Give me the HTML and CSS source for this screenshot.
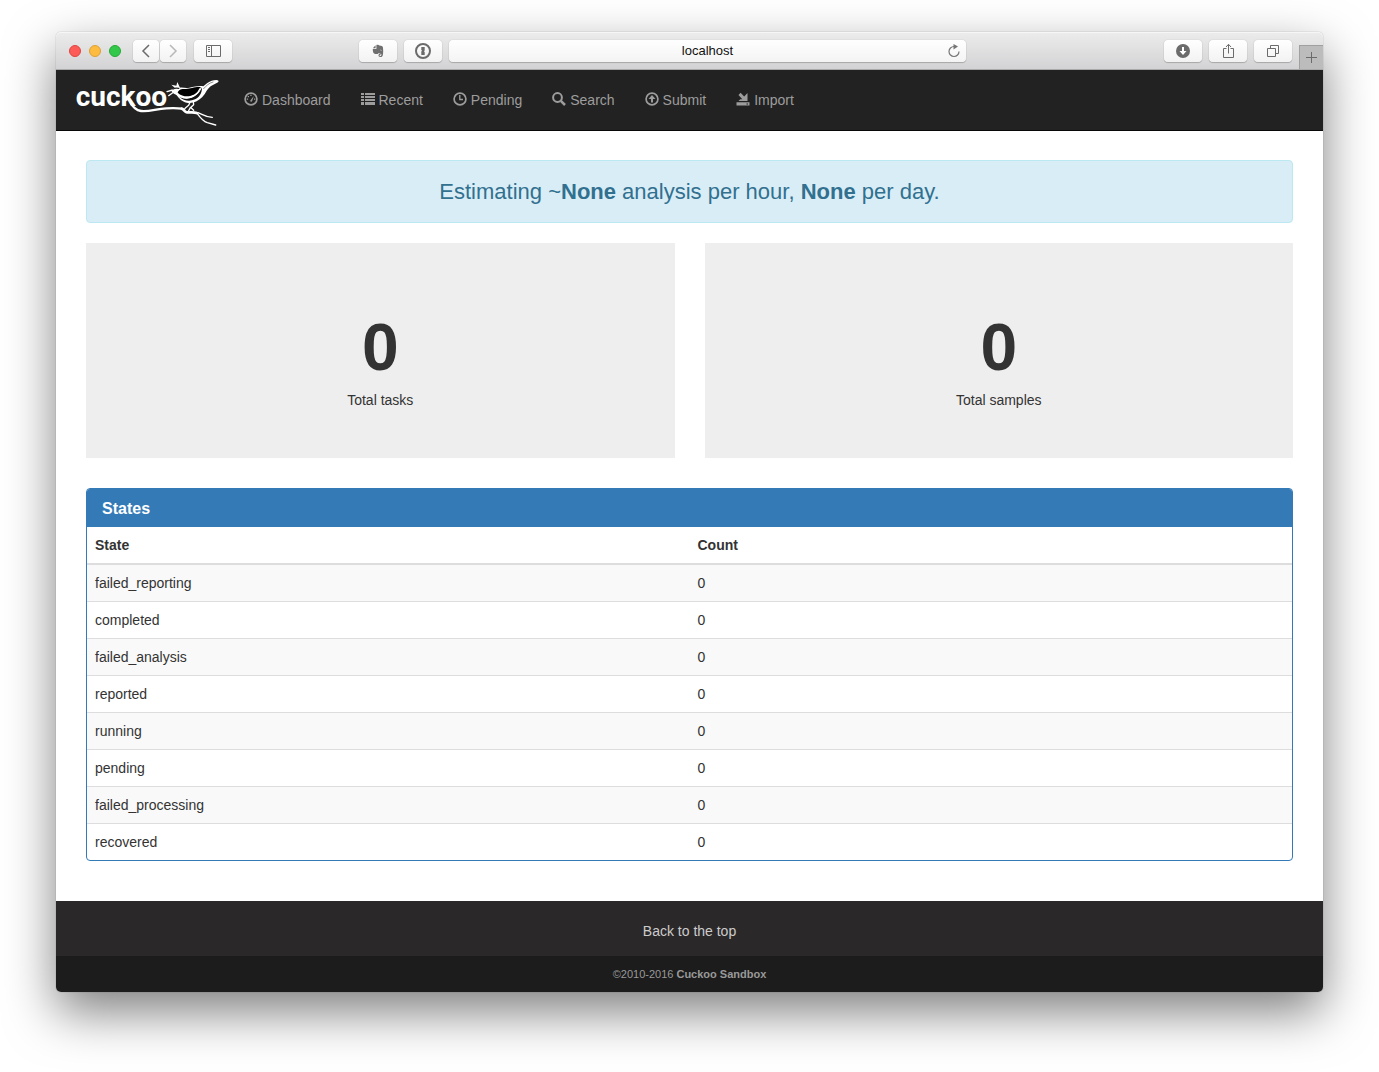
FILE: index.html
```html
<!DOCTYPE html>
<html lang="en">
<head>
<meta charset="utf-8">
<meta name="viewport" content="width=device-width, initial-scale=1">
<title>Cuckoo Sandbox</title>
<link rel="stylesheet" href="styles.css">
</head>
<body>
<div class="window" id="top">
  <div class="toolbar">
    <div class="toolbar-left">
      <div class="lights">
        <button class="light light-close" aria-label="Close"></button>
        <button class="light light-minimise" aria-label="Minimise"></button>
        <button class="light light-zoom" aria-label="Zoom"></button>
      </div>
      <div class="history">
        <button class="tool tool-back" aria-label="Back"><svg width="10" height="14" viewBox="0 0 10 14" fill="none" stroke="#6b6b6b" stroke-width="1.5"><path d="M8 1 2 7l6 6"/></svg></button>
        <button class="tool tool-forward" aria-label="Forward"><svg width="10" height="14" viewBox="0 0 10 14" fill="none" stroke="#b8b8b8" stroke-width="1.5"><path d="m2 1 6 6-6 6"/></svg></button>
      </div>
      <button class="tool" aria-label="Sidebar"><svg width="16" height="14" viewBox="0 0 16 14" fill="none" stroke="#6b6b6b"><path d="M1.500 1.500h14v11h-14zM6.500 1.500v11M3 3.500h2M3 5.500h2M3 7.500h2"/></svg></button>
    </div>
    <div class="toolbar-centre">
      <button class="tool" aria-label="Evernote"><svg width="14" height="14" viewBox="0 0 14 14" fill="#6f6f6f"><path d="M4.600 1.200v3H1.800zM5.400 1c1.300-.4 2.500-.1 3 .6 2 .1 3.300.5 3.500 1.700.4 3 .4 5.600-.1 8-.3 1.400-1.200 1.700-2.500 1.700S7.500 12.300 7.500 11.300s.7-1.600 2-1.500V11c-.6-.1-.9.100-.9.400 0 .4.300.5.900.5.700 0 .9-.5.800-1.900-.9-.5-2.100-.1-2.900-.9-.1.800-.6 1-1.600.9C3.400 9.800 2.300 9.400 2 7.400c-.2-.9-.3-1.600-.2-2.300h3c.4 0 .6-.2.600-.6z"/><path d="M9.200 6c.9-.4 1.300 0 1.500.7z" fill="#f5f5f5"/></svg></button>
      <button class="tool" aria-label="1Password"><svg width="18" height="18" viewBox="0 0 18 18"><circle cx="9" cy="9" r="7" fill="none" stroke="#6b6b6b" stroke-width="2"/><path d="M7.300 5h3.400v3.600l-.8.7.8.7v3H7.300V9.400l.8-.7-.8-.7z" fill="#6b6b6b"/></svg></button>
      <div class="address">
        <input class="address-input" type="text" value="localhost" aria-label="Address">
        <button class="reload" aria-label="Reload"><svg width="14" height="14" viewBox="0 0 14 14" fill="none" stroke="#757575" stroke-width="1.200"><path d="M7 2.500A5 5 0 1 0 12 7.500"/><path d="M6.500 0 11 2.500l-4.500 3z" fill="#757575" stroke="none"/></svg></button>
      </div>
    </div>
    <div class="toolbar-right">
      <button class="tool" aria-label="Downloads"><svg width="14" height="14" viewBox="0 0 14 14"><circle cx="7" cy="7" r="7" fill="#6b6b6b"/><path d="M6 3h2v4h2.500L7 11 3.500 7H6z" fill="#fff"/></svg></button>
      <button class="tool" aria-label="Share"><svg width="13" height="16" viewBox="0 0 13 16" fill="none" stroke="#6b6b6b"><path d="M4.500 5.500h-3v9h10v-9h-3M6.500 10.500V1.500M4 4l2.500-2.700L9 4"/></svg></button>
      <button class="tool" aria-label="Show tabs"><svg width="14" height="14" viewBox="0 0 14 14" fill="none" stroke="#6b6b6b"><path d="M1.500 4.500h8v8h-8zM4.500 4V1.500h8v8H10"/></svg></button>
      <button class="new-tab" aria-label="New tab"><svg width="11" height="11" viewBox="0 0 11 11" fill="none" stroke="#6b6b6b"><path d="M5.500 0v11M0 5.500h11"/></svg></button>
    </div>
  </div>

  <nav class="navbar">
    <a class="brand" href="#top" aria-label="Cuckoo">
      <svg width="145" height="50" viewBox="0 0 435 150">
        <text class="brand-text" x="-1" y="86">cuckoo</text>
        <path d="M163 76c8 16 16 24 32 26 22 3 42-5 76-8 18-1 34-1 46 1" fill="none" stroke="#fff" stroke-width="7"/>
        <g transform="translate(264 -6)" fill="none" stroke="#fff" stroke-linecap="round" stroke-linejoin="round">
          <path d="M53 101c8 2 8 10 16 11 9 1 19-2 29 2" stroke-width="8"/>
          <path d="M98 113c10 14 17 25 32 30l25 7M102 113c14 5 20 13 43 14" stroke-width="4"/>
          <path d="M88 80l1 9-10 9-7 13M78 82l-4 9-9 7-6 8M81 98l8 8" stroke-width="4"/>
          <path d="M9 50l17-5M14 62l12-9" stroke-width="4"/>
          <path d="M23 51c1-8 5-11 9-13l-10-9 15 3 3-11 8 17c9-1 18 2 28 0 16-3 29-6 42-4l12-10c9-6 17-8 27-9 6 0 9 3 5 7-7 5-15 7-22 12-12 9-14 21-25 32-14 14-30 20-47 17-14-2-22-12-30-22-4-4-10-3-13-10z" fill="#fff" stroke="none"/>
          <path d="M41 53c4-12 15-11 25-11 14-1 24-7 44-6-2 13-10 21-23 24-13 6-32 6-46-7z" fill="#000" stroke="none"/>
          <path d="M46 65c15 9 36 8 50-4 9-7 14-14 18-24 0 18-8 31-21 36-18 8-35 3-47-8z" fill="#111" stroke="none"/>
          <path d="M50 65c14 6 31 4 44-6 7-5 11-11 14-18" stroke-width="4"/>
          <path d="M119 41c8-9 16-17 28-20" stroke="#555" stroke-width="2"/>
          <path d="M27 42c6-4 12-3 17-2" stroke="#222" stroke-width="4"/>
        </g>
      </svg>
    </a>
    <ul class="nav">
      <li><a class="nav-link" href="#dashboard"><svg class="icon" viewBox="0 0 14 14"><circle cx="7" cy="7" r="5.900" fill="none" stroke="currentColor" stroke-width="1.700"/><path d="M6.300 8.500 9.800 4l-1.700 5.300a1 1 0 0 1-1.800-.8zM2.700 6.500h1.400v1.200H2.700zM3.700 4h1.300v1.200H3.700zM6.300 2.700h1.300v1.200H6.300zM10 6.500h1.300v1.200H10z"/></svg>Dashboard</a></li>
      <li><a class="nav-link" href="#recent"><svg class="icon" viewBox="0 0 14 14"><path d="M0 1h3v2H0zM4 1h10v2H4zM0 4h3v2H0zM4 4h10v2H4zM0 7h3v2H0zM4 7h10v2H4zM0 10h3v3H0zM4 10h10v3H4z"/></svg>Recent</a></li>
      <li><a class="nav-link" href="#pending"><svg class="icon" viewBox="0 0 14 14"><g fill="none" stroke="currentColor"><circle cx="7" cy="7" r="5.900" stroke-width="1.700"/><path d="M6.800 3v4.500H10" stroke-width="1.300"/></g></svg>Pending</a></li>
      <li><a class="nav-link" href="#search"><svg class="icon" viewBox="0 0 14 14"><g fill="none" stroke="currentColor" stroke-width="2"><circle cx="5.500" cy="5.500" r="4.400"/><path d="m8.800 8.800 4.200 4.200" stroke-width="2.500"/></g></svg>Search</a></li>
      <li><a class="nav-link" href="#submit"><svg class="icon" viewBox="0 0 14 14"><circle cx="7" cy="7" r="5.900" fill="none" stroke="currentColor" stroke-width="1.700"/><path d="M7 3l3.500 4H8v3.500H6V7H3.500z"/></svg>Submit</a></li>
      <li><a class="nav-link" href="#import"><svg class="icon" viewBox="0 0 14 14"><path d="M.5 10.200h13v3.300H.5zM2.500 9l1.800-1.800h2L2.500 3 4.600.8l3.600 3.600L11.500 1v8z"/><path d="M10.500 11.500h1.500v1h-1.500z" fill="#222"/></svg>Import</a></li>
    </ul>
  </nav>

  <main class="content">
    <p class="alert">Estimating ~<strong>None</strong> analysis per hour, <strong>None</strong> per day.</p>
    <div class="totals">
      <section class="total"><h1 class="total-value">0</h1><p class="total-label">Total tasks</p></section>
      <section class="total"><h1 class="total-value">0</h1><p class="total-label">Total samples</p></section>
    </div>
    <section class="panel">
      <h3 class="panel-title">States</h3>
      <table class="states">
        <thead><tr><th scope="col">State</th><th scope="col">Count</th></tr></thead>
        <tbody>
          <tr><td>failed_reporting</td><td>0</td></tr>
          <tr><td>completed</td><td>0</td></tr>
          <tr><td>failed_analysis</td><td>0</td></tr>
          <tr><td>reported</td><td>0</td></tr>
          <tr><td>running</td><td>0</td></tr>
          <tr><td>pending</td><td>0</td></tr>
          <tr><td>failed_processing</td><td>0</td></tr>
          <tr><td>recovered</td><td>0</td></tr>
        </tbody>
      </table>
    </section>
  </main>

  <footer class="footer">
    <a class="footer-top" href="#top">Back to the top</a>
    <p class="footer-copy">©2010-2016 <a class="footer-link" href="#about">Cuckoo Sandbox</a></p>
  </footer>
</div>
</body>
</html>
```
FILE: styles.css
```css
* { box-sizing: border-box; }

body {
  margin: 0;
  padding: 32px 56px 80px;
  background: #fff;
  color: #333;
  font: 14px/20px "Helvetica Neue", "Liberation Sans", Arial, sans-serif;
}

h1, h3, p, ul { margin: 0; padding: 0; }
button { padding: 0; border: 0; background: none; }
button svg { display: block; }

.window {
  border-radius: 5px;
  background: #fff;
  box-shadow: 0 0 1px rgba(0, 0, 0, .5), 0 20px 50px rgba(0, 0, 0, .5);
}

/* Browser toolbar */
.toolbar {
  display: grid;
  grid-template-columns: 303px 1fr 357px;
  height: 38px;
  border-bottom: 1px solid #a9a9a9;
  border-radius: 5px 5px 0 0;
  background: linear-gradient(#ececec, #d3d3d5);
  box-shadow: inset 0 1px #f6f6f6;
}
.toolbar-left, .toolbar-centre, .toolbar-right { display: flex; align-items: center; }
.toolbar-left { gap: 8px; padding-left: 13px; }
.toolbar-centre { gap: 7px; }
.toolbar-right { justify-content: flex-end; gap: 7px; }
.lights { display: flex; gap: 8px; margin-right: 4px; }
.light { width: 12px; height: 12px; border: 1px solid; border-radius: 50%; }
.light-close { background: #fc5b57; border-color: #e0443f; }
.light-minimise { background: #fdbc40; border-color: #dea034; }
.light-zoom { background: #34c84a; border-color: #24a936; }
.history { display: flex; gap: 1px; }
.tool {
  display: flex;
  align-items: center;
  justify-content: center;
  flex: none;
  width: 38px;
  height: 22px;
  border-radius: 4px;
  background: linear-gradient(#fff, #f2f2f2);
  box-shadow: 0 0 1px rgba(0, 0, 0, .3), 0 1px 1px rgba(0, 0, 0, .2);
}
.tool-back, .tool-forward { width: 26px; }
.address { position: relative; flex: 1; display: flex; }
.address-input {
  width: 100%;
  height: 22px;
  padding: 0 24px;
  border: 0;
  border-radius: 4px;
  background: linear-gradient(#fff, #f4f4f4);
  box-shadow: 0 0 1px rgba(0, 0, 0, .3), 0 1px 1px rgba(0, 0, 0, .2);
  color: #111;
  font: 13px/20px "Helvetica Neue", "Liberation Sans", Arial, sans-serif;
  text-align: center;
}
.reload { position: absolute; top: 4px; right: 5px; }
.new-tab {
  display: flex;
  align-items: center;
  justify-content: center;
  align-self: flex-end;
  width: 24px;
  height: 24px;
  border: 1px solid #a0a0a0;
  border-width: 1px 0 0 1px;
  background: #bcbcbc;
}

/* Site navigation */
.navbar {
  display: flex;
  align-items: center;
  height: 61px;
  padding: 0 20px;
  border-bottom: 1px solid #080808;
  background: #222;
}
.brand { display: flex; margin-top: 4px; }
.brand-text { fill: #fff; font: bold 84px Roboto, "Liberation Sans", sans-serif; }
.nav { display: flex; padding-left: 8px; list-style: none; }
.nav-link {
  display: flex;
  align-items: center;
  gap: 4px;
  padding: 0 15px;
  color: #9d9d9d;
  text-decoration: none;
}
.icon { width: 14px; height: 14px; margin-bottom: 2px; fill: currentColor; }

/* Page content */
.content { padding: 29px 30px 40px; }
.alert {
  padding: 15px;
  border: 1px solid #bce8f1;
  border-radius: 4px;
  background: #d9edf7;
  color: #31708f;
  font-size: 22px;
  line-height: 31px;
  text-align: center;
}
.totals {
  display: grid;
  grid-template-columns: 1fr 1fr;
  gap: 30px;
  margin: 20px 0 30px;
}
.total { padding: 70px 60px 48px; background: #eee; text-align: center; }
.total-value { margin-bottom: 8px; font-size: 66px; line-height: 69px; }
.panel { overflow: hidden; border: 1px solid #337ab7; border-radius: 4px; }
.panel-title {
  padding: 11px 15px 9px;
  background: #337ab7;
  color: #fff;
  font-size: 16px;
  line-height: 18px;
}
.states { width: 100%; border-spacing: 0; table-layout: fixed; }
.states th { padding: 8px; border-bottom: 2px solid #ddd; text-align: left; }
.states td { padding: 8px; border-top: 1px solid #ddd; }
.states tbody tr:first-child td { border-top: 0; }
.states tbody tr:nth-child(odd) { background: #f9f9f9; }

/* Footer */
.footer {
  overflow: hidden;
  border-radius: 0 0 5px 5px;
  background: #1c1c1c;
  text-align: center;
}
.footer-top {
  display: block;
  padding: 20px 0 15px;
  background: #2a2829;
  color: #ccc;
  text-decoration: none;
}
.footer-copy { padding: 8px 0; color: #999; font-size: 11px; }
.footer-link { color: #999; font-weight: bold; text-decoration: none; }
```
